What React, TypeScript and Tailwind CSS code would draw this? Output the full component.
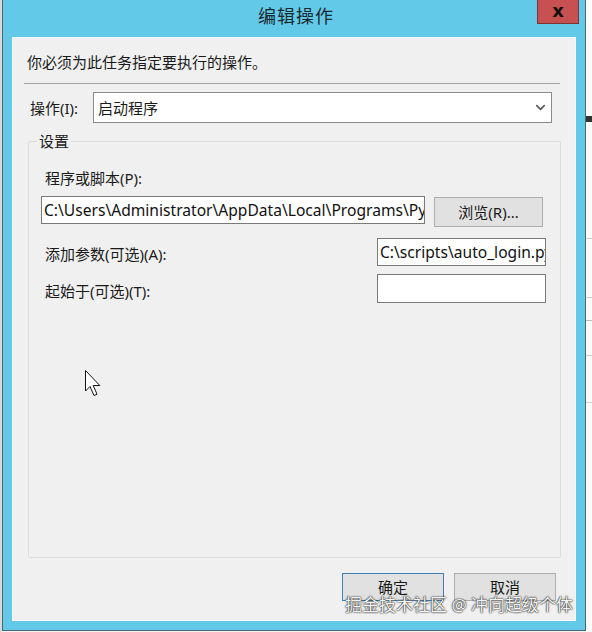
import { ChevronDown } from 'lucide-react';

const font = "font-['Noto_Sans','Noto_Sans_CJK_SC',sans-serif]";

const Cursor = () => (
  <svg width="16" height="27" viewBox="0 0 16 27" className="absolute left-[85px] top-[370px]">
    <path
      d="M0.5 0.5 V21 L5 16.5 L9 25.5 L12 24.2 L8.2 15.5 H14.8 Z"
      fill="#ffffff"
      stroke="#111111"
      strokeWidth="1"
      strokeLinejoin="round"
    />
  </svg>
);

const TextBox = ({ value, className }: { value: string; className: string }) => (
  <div
    className={`bg-white border border-[#7a7a7a] overflow-hidden whitespace-nowrap text-[15.6px] leading-[26px] pl-[2px] text-[#111] ${className}`}
  >
    {value}
  </div>
);

export default function App() {
  return (
    <div className={`w-[592px] h-[632px] overflow-hidden flex bg-[#f3f3f3] relative ${font}`}>
      {/* desktop strip on the left */}
      <div className="w-[2px] h-full bg-[#d8d8d8]" />

      {/* the dialog window */}
      <div className="w-[584px] h-[631px] bg-[#62c9e8] border-x border-b border-[#4d6670] flex flex-col">
        <div className="h-[37px] relative flex items-center justify-center">
          <span className="text-[18px] leading-[24px] text-[#1c2a30] tracking-[1px] -mt-[5px] ml-[4px]">编辑操作</span>
          <div className="absolute right-[6px] -top-px w-[42px] h-[25px] bg-[#c75050] border border-[#7c3535] flex items-center justify-center">
            <span className="text-[18px] leading-none font-bold text-[#111] font-['DejaVu_Sans',sans-serif] -mt-[2px]">x</span>
          </div>
        </div>

        <div className="ml-[9px] w-[564px] h-[584px] bg-[#f0f0f0] border border-[#f7f7f7] flex flex-col text-[#1a1a1a] text-[15px] leading-[18px]">
          <p className="ml-[14px] mt-[15px]">你必须为此任务指定要执行的操作。</p>
          <div className="ml-[11px] mr-[15px] mt-[12px] h-[2px] border-t border-[#a0a0a0] border-b-white" />

          <div className="mt-[7px] flex items-center">
            <span className="ml-[17px] w-[63px]">操作(I):</span>
            <div className="w-[459px] h-[31px] bg-white border border-[#8a8a8a] flex items-center justify-between pl-[4px] pr-[3px]">
              <span>启动程序</span>
              <ChevronDown size={15} strokeWidth={2.5} className="text-[#555]" />
            </div>
          </div>

          <fieldset className="ml-[15px] w-[533px] h-[426px] mt-[9px] border border-[#dcdcdc] rounded-[2px] px-0 pb-0">
            <legend className="ml-[8px] px-[2px] leading-[18px]">设置</legend>
            <div className="mt-[19px] ml-[16px]">程序或脚本(P):</div>
            <div className="mt-[9px] ml-[12px] flex items-start gap-[9px]">
              <TextBox value="C:\Users\Administrator\AppData\Local\Programs\Python" className="w-[384px] h-[28px]" />
              <button className="w-[109px] h-[30px] mt-[1px] bg-[#e1e1e1] border border-[#adadad] text-[15px]">
                浏览(R)...
              </button>
            </div>
            <div className="mt-[11px] flex items-center justify-between mr-[14px]">
              <span className="ml-[16px] mt-[4px]">添加参数(可选)(A):</span>
              <TextBox value="C:\scripts\auto_login.py" className="w-[169px] h-[28px]" />
            </div>
            <div className="mt-[8px] flex items-center justify-between mr-[14px]">
              <span className="ml-[16px] mt-[4px]">起始于(可选)(T):</span>
              <TextBox value="" className="w-[169px] h-[29px]" />
            </div>
          </fieldset>

          <div className="mt-[15px] flex justify-end gap-[10px] pr-[19px]">
            <button className="w-[102px] h-[28px] bg-[#e1e1e1] border border-[#3c7fb1] text-[15px]">确定</button>
            <button className="w-[102px] h-[28px] bg-[#e1e1e1] border border-[#adadad] text-[15px]">取消</button>
          </div>
        </div>
      </div>

      {/* desktop strip on the right */}
      <div className="flex-1 h-full bg-white flex flex-col">
        <div className="mt-[116px] h-[6px] bg-[#333]" />
        <div className="mt-[116px] h-px bg-[#cfcfcf]" />
        <div className="mt-[58px] h-px bg-[#cfcfcf]" />
        <div className="mt-[22px] h-px bg-[#bdbdbd]" />
        <div className="mt-[34px] h-px bg-[#cfcfcf]" />
        <div className="mt-[46px] h-px bg-[#cfcfcf]" />
      </div>

      <Cursor />

      <div className="absolute left-[345px] top-[594px] text-[17px] leading-[22px] text-[#f4f4f4] [text-shadow:0_0_2px_rgba(0,0,0,0.9),0_0_1px_rgba(0,0,0,0.9)] whitespace-nowrap">
        掘金技术社区 @ 冲向超级个体
      </div>
    </div>
  );
}
